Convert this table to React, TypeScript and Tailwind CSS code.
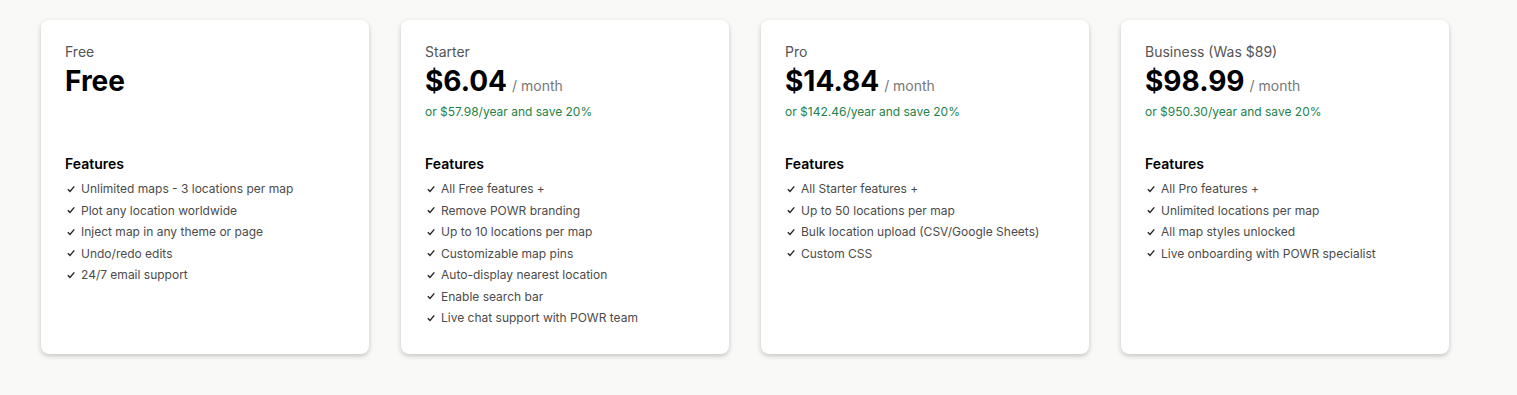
const plans = [
    {
        label: "Free",
        price: "Free",
        period: "",
        yearly: "",
        features: [
            "Unlimited maps - 3 locations per map",
            "Plot any location worldwide",
            "Inject map in any theme or page",
            "Undo/redo edits",
            "24/7 email support",
        ],
    },
    {
        label: "Starter",
        price: "$6.04",
        period: "/ month",
        yearly: "or $57.98/year and save 20%",
        features: [
            "All Free features +",
            "Remove POWR branding",
            "Up to 10 locations per map",
            "Customizable map pins",
            "Auto-display nearest location",
            "Enable search bar",
            "Live chat support with POWR team",
        ],
    },
    {
        label: "Pro",
        price: "$14.84",
        period: "/ month",
        yearly: "or $142.46/year and save 20%",
        features: [
            "All Starter features +",
            "Up to 50 locations per map",
            "Bulk location upload (CSV/Google Sheets)",
            "Custom CSS",
        ],
    },
    {
        label: "Business (Was $89)",
        price: "$98.99",
        period: "/ month",
        yearly: "or $950.30/year and save 20%",
        features: [
            "All Pro features +",
            "Unlimited locations per map",
            "All map styles unlocked",
            "Live onboarding with POWR specialist",
        ],
    },
];

type Plan = (typeof plans)[number];

export default function App() {
    return (
        <div
            className="min-h-screen w-full bg-[#f9f9f7] pl-[41px] pt-5"
            style={{ fontFamily: "Inter, sans-serif" }}
        >
            <div className="flex gap-8">
                {plans.map((plan) => (
                    <PlanCard key={plan.label} plan={plan} />
                ))}
            </div>
        </div>
    );
}

function PlanCard({ plan }: { plan: Plan }) {
    return (
        <div className="w-[328px] h-[334px] shrink-0 bg-white rounded-lg shadow-[0_2px_5px_rgba(0,0,0,0.22)] px-6 pt-[22px]">
            <p className="text-sm leading-5 text-[#555]">{plan.label}</p>
            <div className="mt-[1px] flex items-baseline gap-[5px]">
                <span className="text-[28px] leading-9 font-bold text-black">{plan.price}</span>
                {plan.period && <span className="text-sm text-[#777]">{plan.period}</span>}
            </div>
            <p className="mt-[3px] h-5 text-xs leading-5 text-[#1e8249]">{plan.yearly}</p>

            <p className="mt-[32px] text-sm leading-5 font-semibold text-black">Features</p>
            <ul className="mt-[4px] flex flex-col">
                {plan.features.map((f) => (
                    <li key={f} className="flex items-center gap-[6px] pl-[2px] text-xs leading-[21.5px] text-[#4b4b4b]">
                        <svg width="8" height="8" viewBox="0 0 8 8" className="shrink-0">
                            <path d="M0.8 4.2 L3 6.4 L7.3 1.4" fill="none" stroke="#222" strokeWidth="1.4" />
                        </svg>
                        {f}
                    </li>
                ))}
            </ul>
        </div>
    );
}
